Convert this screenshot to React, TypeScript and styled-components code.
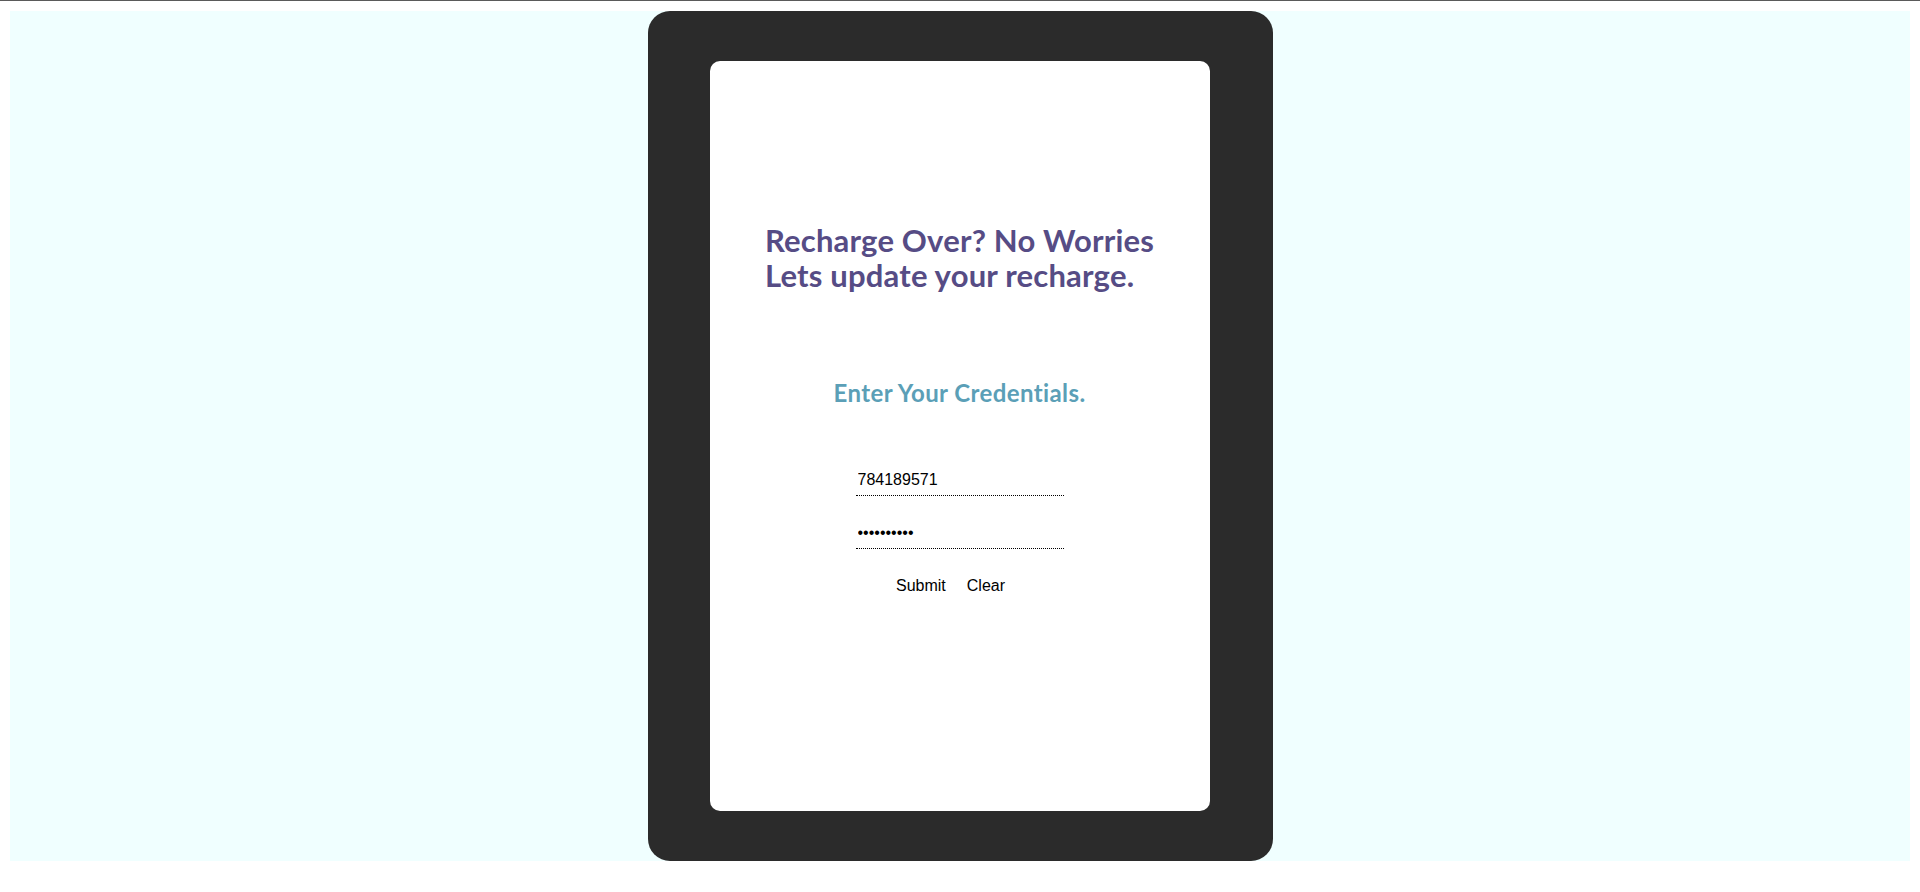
import React from "react";
import styled, { createGlobalStyle } from "styled-components";

const Global = createGlobalStyle`
  html, body { margin: 0; padding: 0; background: #ffffff; }
  body { font-family: "Liberation Sans", Arial, sans-serif; }
  * { box-sizing: border-box; }
`;

const TopRule = styled.div`
  height: 1px;
  background: #5a5a5a;
`;

const Page = styled.div`
  padding: 10px 10px 31px 10px;
`;

const Stage = styled.main`
  height: 850px;
  background: #f0ffff;
  display: flex;
  justify-content: center;
`;

const Device = styled.div`
  width: 625px;
  height: 850px;
  padding: 50px 63px 50px 62px;
  background: #2b2b2b;
  border-radius: 22px;
`;

const Screen = styled.section`
  width: 500px;
  height: 750px;
  background: #ffffff;
  border-radius: 10px;
  display: flex;
  flex-direction: column;
  align-items: center;
`;

const Headline = styled.h1`
  margin: 162px 0 0 0;
  font-family: Lato, "Open Sans", sans-serif;
  font-weight: 700;
  font-size: 31px;
  line-height: 35px;
  color: #564c85;
  text-align: left;
  letter-spacing: 0.2px;
`;

const Subhead = styled.h2`
  margin: 86px 0 0 0;
  font-family: Lato, "Open Sans", sans-serif;
  font-weight: 700;
  font-size: 24px;
  line-height: 28px;
  color: #5b9fb7;
  text-align: center;
  letter-spacing: 0.4px;
`;

const Form = styled.form`
  margin-top: 64px;
  display: flex;
  flex-direction: column;
  align-items: center;
`;

const Field = styled.input<{ $gap?: number }>`
  width: 208px;
  height: 25px;
  margin-top: ${(p) => p.$gap ?? 0}px;
  padding: 0 2px 6px 2px;
  border: none;
  border-bottom: 1px dotted #000000;
  background: transparent;
  font-family: "Liberation Sans", Arial, sans-serif;
  font-size: 16px;
  color: #000000;
  outline: none;
`;

const Actions = styled.div`
  margin-top: 27px;
  display: flex;
  gap: 9px;
  padding-right: 18px;
`;

const TextButton = styled.button`
  padding: 1px 6px;
  border: none;
  background: transparent;
  font-family: "Liberation Sans", Arial, sans-serif;
  font-size: 16px;
  line-height: 18px;
  color: #000000;
  cursor: pointer;
`;

export default function App() {
  return (
    <>
      <Global />
      <TopRule />
      <Page>
        <Stage>
          <Device>
            <Screen>
              <Headline>
                Recharge Over? No Worries
                <br />
                Lets update your recharge.
              </Headline>
              <Subhead>Enter Your Credentials.</Subhead>
              <Form onSubmit={(e) => e.preventDefault()}>
                <Field type="text" defaultValue="784189571" />
                <Field type="password" defaultValue="abcdefghij" $gap={28} />
                <Actions>
                  <TextButton type="submit">Submit</TextButton>
                  <TextButton type="reset">Clear</TextButton>
                </Actions>
              </Form>
            </Screen>
          </Device>
        </Stage>
      </Page>
    </>
  );
}
